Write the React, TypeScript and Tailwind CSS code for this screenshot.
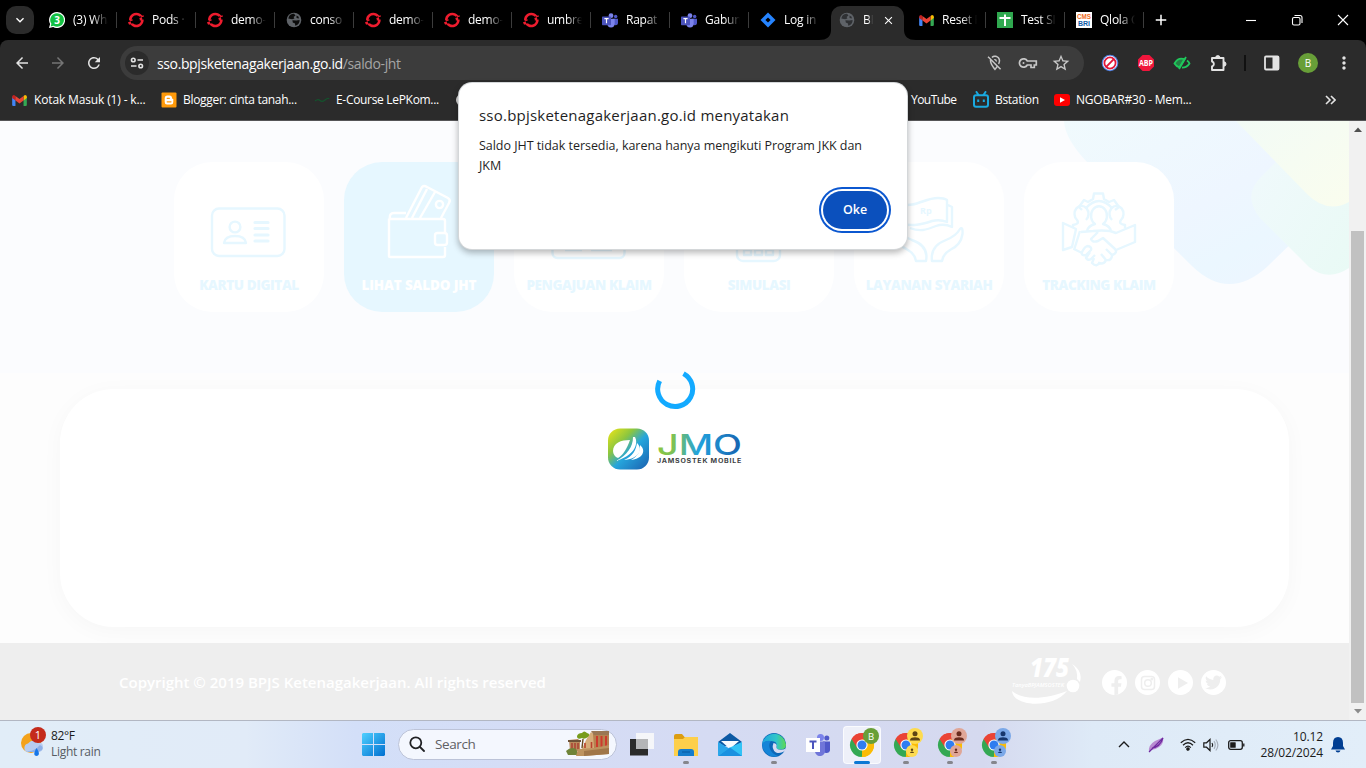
import React from "react";
import {
  MdArrowBack,
  MdArrowForward,
  MdRefresh,
  MdOutlineLocationOff,
  MdStarBorder,
  MdMoreVert,
  MdClose,
  MdAdd,
  MdKeyboardArrowDown,
} from "react-icons/md";
import { SiRedhatopenshift } from "react-icons/si";
import { FaFacebookF, FaTwitter } from "react-icons/fa";

const OpenShift = () => <SiRedhatopenshift className="size-4 text-[#ee1c2e]" />;

const Globe = ({ fill, land }: { fill: string; land: string }) => (
  <svg viewBox="0 0 16 16" className="size-4">
    <circle cx="8" cy="8" r="7.3" fill={fill} />
    <path d="M3 4.5 C4 2.5 6 1.6 8 1.8 L9.5 3.4 L7.6 5 L8.4 6.4 L6.2 7.2 L2.3 6.6Z" fill={land} />
    <path d="M6.4 8.2 L10.4 8.4 L13.6 8 C13.8 10.6 12 13.2 9.2 13.8 L9 11.6 L6.8 10.4Z" fill={land} />
    <path d="M10.5 3.6 L12.6 4.8 L12.8 6.6 L10.6 6Z" fill={land} />
  </svg>
);

const Gmail = () => (
  <svg viewBox="0 0 16 12" className="h-[11px] w-[15px]">
    <path d="M0 1.5 L3.6 4.2 V12 H1.2 Q0 12 0 10.8Z" fill="#4285f4" />
    <path d="M16 1.5 L12.4 4.2 V12 H14.8 Q16 12 16 10.8Z" fill="#34a853" />
    <path d="M12.4 1 L14 0 Q16 0 16 1.8 V3.2 L12.4 5.9Z" fill="#fbbc04" />
    <path d="M3.6 1 L2 0 Q0 0 0 1.8 V3.2 L3.6 5.9Z" fill="#c5221f" />
    <path d="M3.6 1 L8 4.4 L12.4 1 V5.9 L8 9.2 L3.6 5.9Z" fill="#ea4335" />
  </svg>
);

const WhatsApp = () => (
  <svg viewBox="0 0 16 16" className="size-4">
    <path d="M8 0 A8 8 0 1 1 4.2 15 L0 16 L1.1 12 A8 8 0 0 1 8 0Z" fill="#fff" />
    <path d="M8 1.2 A6.8 6.8 0 1 1 4.4 13.7 L1.7 14.4 L2.4 11.8 A6.8 6.8 0 0 1 8 1.2Z" fill="#12c143" />
    <text x="8" y="11.6" fontSize="10" fontWeight="700" fill="#fff" textAnchor="middle" fontFamily="Open Sans, sans-serif">3</text>
  </svg>
);

const Teams = ({ className }: { className: string }) => (
  <svg viewBox="0 0 24 22" className={className}>
    <circle cx="20.5" cy="5" r="2.6" fill="#5059c9" />
    <path d="M17 8.5 H24 V15 A3.6 3.6 0 0 1 17 15.5Z" fill="#5059c9" />
    <circle cx="13.5" cy="3.8" r="3.6" fill="#7b83eb" />
    <path d="M8 8.5 H19 V16 A5.5 5.5 0 0 1 8 16Z" fill="#7b83eb" />
    <rect x="0" y="5" width="13.5" height="13" rx="1" fill="#4b53bc" />
    <path d="M3.6 8.2 H9.9 M6.75 8.2 V15.2" stroke="#fff" strokeWidth="1.7" />
  </svg>
);

const Jira = () => (
  <svg viewBox="0 0 16 16" className="size-4">
    <path d="M8 .5 L15.5 8 L8 15.5 L.5 8Z" fill="#2684ff" />
    <path d="M8 5.4 L10.6 8 L8 10.6 L5.4 8Z" fill="#000" />
  </svg>
);

const Sheets = () => (
  <svg viewBox="0 0 16 16" className="size-4">
    <rect width="16" height="16" fill="#2fa84f" />
    <path d="M8 2.5 V14 M2.5 6 H13.5" stroke="#fff" strokeWidth="2" />
  </svg>
);

const Cms = () => (
  <svg viewBox="0 0 16 16" className="size-4">
    <rect width="16" height="16" fill="#fff" />
    <g fontFamily="Liberation Sans, sans-serif" fontWeight="700" fontSize="7.4">
      <text x="1" y="7.4" fill="#f26b21" textLength="14" lengthAdjust="spacingAndGlyphs">CMS</text>
      <text x="2" y="14" fill="#125ea8" textLength="12" lengthAdjust="spacingAndGlyphs">BRI</text>
    </g>
  </svg>
);

const Tab = ({ icon, title, sep = true }: { icon: React.ReactNode; title: string; sep?: boolean }) => (
  <div className="flex h-full w-[79px] shrink-0 items-center pl-[11px]">
    <div className="flex w-4 shrink-0 justify-center">{icon}</div>
    <div className="ml-2 w-[35px] overflow-hidden whitespace-nowrap text-[12px] tracking-[-0.02em] text-white [mask-image:linear-gradient(to_right,black_55%,transparent)]">
      {title}
    </div>
    {sep && <div className="ml-auto h-4 w-px bg-[#3c3c3c]" />}
  </div>
);

const TabStrip = () => (
  <div className="flex h-10 bg-black">
    <div className="flex w-[38px] shrink-0 items-center pl-1.5">
      <div className="flex size-7 items-center justify-center rounded-[10px] bg-[#2b2b2b]">
        <MdKeyboardArrowDown className="size-4 text-white" />
      </div>
    </div>
    <Tab icon={<WhatsApp />} title="(3) Wha" />
    <Tab icon={<OpenShift />} title="Pods ·" />
    <Tab icon={<OpenShift />} title="demo-" />
    <Tab icon={<Globe fill="#5f6368" land="#0b0b0b" />} title="conso" />
    <Tab icon={<OpenShift />} title="demo-" />
    <Tab icon={<OpenShift />} title="demo-" />
    <Tab icon={<OpenShift />} title="umbre" />
    <Tab icon={<Teams className="h-[15px] w-4" />} title="Rapat" />
    <Tab icon={<Teams className="h-[15px] w-4" />} title="Gabun" />
    <Tab icon={<Jira />} title="Log in" sep={false} />
    <div className="flex w-[79px] shrink-0 items-end">
      <svg viewBox="0 0 12 10" className="-ml-[9px] h-2.5 w-[12px] shrink-0">
        <path d="M0 10 Q12 10 12 0 V10Z" fill="#2b2b2b" />
      </svg>
      <div className="flex h-[34px] w-[73px] shrink-0 items-center rounded-t-[10px] bg-[#2b2b2b] pb-[6px] pl-2">
        <Globe fill="#5f6368" land="#2f3134" />
        <div className="ml-2 w-2.5 overflow-hidden whitespace-nowrap text-[12px] text-white [mask-image:linear-gradient(to_right,black_50%,transparent)]">BPJS</div>
        <MdClose className="ml-[9px] size-[13px] text-white" />
      </div>
      <svg viewBox="0 0 12 10" className="h-2.5 w-[12px] shrink-0">
        <path d="M0 0 Q0 10 12 10 H0Z" fill="#2b2b2b" />
      </svg>
    </div>
    <Tab icon={<Gmail />} title="Reset P" />
    <Tab icon={<Sheets />} title="Test SI" />
    <Tab icon={<Cms />} title="Qlola C" />
    <div className="flex w-[34px] items-center justify-center">
      <MdAdd className="size-[18px] text-white" />
    </div>
    <div className="ml-auto flex items-center pr-[17px] text-white">
      <svg viewBox="0 0 104 12" className="h-3 w-[104px]" fill="none" stroke="currentColor" strokeWidth="1.1">
        <path d="M1 6.5 H11" />
        <rect x="47.5" y="3.5" width="7.5" height="7.5" rx="1.5" />
        <path d="M49.500 1.5 H55 Q57 1.5 57 3.5 V9" />
        <path d="M93 1 L103 11 M103 1 L93 11" />
      </svg>
    </div>
  </div>
);

const Toolbar = () => (
  <div className="flex h-[44px] items-center rounded-t-[8px] bg-[#2b2b2b] pl-[13px] text-[#e3e3e3]">
    <MdArrowBack className="mt-0.5 size-[18px]" />
    <MdArrowForward className="ml-[18px] mt-0.5 size-[18px] text-[#757575]" />
    <MdRefresh className="ml-[18px] mt-0.5 size-[18px]" />
    <div className="ml-[17px] mt-0.5 flex h-[34px] w-[964px] items-center rounded-full bg-[#3c3c3c] pl-[5px] pr-3.5">
      <div className="flex size-6 items-center justify-center rounded-full bg-[#2b2b2b]">
        <svg viewBox="0 0 14 12" className="h-3 w-3.5" fill="none" stroke="#e3e3e3" strokeWidth="1.6">
          <circle cx="3.3" cy="3" r="1.8" />
          <path d="M7.5 3 H13 M1 9 H6.5" />
          <circle cx="10.7" cy="9" r="1.8" />
        </svg>
      </div>
      <div className="ml-2 text-[14px] tracking-[-0.027em] text-white">
        sso.bpjsketenagakerjaan.go.id<span className="text-[#a5a5a5]">/saldo-jht</span>
      </div>
      <div className="ml-auto flex items-center gap-[14px] text-[#c7c7c7]">
        <MdOutlineLocationOff className="size-[18px]" />
        <svg viewBox="0 0 20 12" className="h-3 w-5" fill="none" stroke="currentColor" strokeWidth="1.7">
          <path d="M9.3 4 A4.2 4.2 0 1 0 9.3 8 H13 V10.5 H16.3 V8 H18.3 V4Z" />
          <circle cx="5.5" cy="6" r="1" fill="currentColor" stroke="none" />
        </svg>
        <MdStarBorder className="-mx-px size-5" />
      </div>
    </div>
    <div className="ml-[17px] mt-0.5 flex grow items-center">
      <svg viewBox="0 0 18 18" className="size-[18px]">
        <circle cx="9" cy="9" r="8.300" fill="#4f7fe0" />
        <circle cx="9" cy="9" r="7.200" fill="#fff" />
        <circle cx="9" cy="9" r="5.6" fill="#fff" stroke="#e0163a" strokeWidth="1.800" />
        <path d="M5.2 12.8 L12.8 5.2" stroke="#e0163a" strokeWidth="1.900" />
      </svg>
      <svg viewBox="0 0 18 18" className="ml-[18px] size-[18px]">
        <path d="M5.6 1 H12.4 L17 5.6 V12.4 L12.4 17 H5.6 L1 12.4 V5.6Z" fill="#f0163c" />
        <text x="2" y="11.900" fontSize="8" fontWeight="700" fill="#fff" textLength="14" lengthAdjust="spacingAndGlyphs" fontFamily="Open Sans, sans-serif">ABP</text>
      </svg>
      <svg viewBox="0 0 18 14" className="ml-[18px] h-3.5 w-[18px]" fill="none" stroke="#1fc75b" strokeWidth="1.8">
        <path d="M1.5 7.5 C4 3 8 2 11.5 3.2 L6.5 11.3 C4 10.6 2.5 9.2 1.5 7.5Z" fill="#1fc75b" fillOpacity=".55" />
        <path d="M14 4.5 Q16 6 16.5 7.5 C14.6 10.6 12 11.6 9 11.6 M13 1 L6 13" />
      </svg>
      <svg viewBox="0 0 18 18" className="ml-[19px] size-[18px]" fill="none" stroke="#e3e3e3" strokeWidth="1.900" strokeLinejoin="round">
        <path d="M2 4 H13.500 V16 H2 V12.500 A2.600 2.600 0 0 0 2 7.500Z" />
        <path d="M5.600 3.800 A2.200 2.200 0 0 1 10 3.800Z M13.800 7.800 A2.200 2.200 0 0 1 13.800 12.200Z" fill="#e3e3e3" strokeWidth="1" />
      </svg>
      <div className="ml-4 h-4 w-0.5 bg-[#111]" />
      <svg viewBox="0 0 16 16" className="ml-[18px] size-4">
        <rect x="1" y="1.5" width="13.5" height="13" rx="1" fill="none" stroke="#e3e3e3" strokeWidth="1.8" />
        <rect x="8.5" y="1.5" width="6" height="13" fill="#e3e3e3" />
      </svg>
      <div className="ml-[18px] flex size-5 items-center justify-center rounded-full bg-[#689f38] text-[10px] text-white">B</div>
      <MdMoreVert className="ml-[16px] size-5" />
    </div>
  </div>
);

const bm = "text-[12px] tracking-[-0.026em] text-white whitespace-nowrap";

const Bookmarks = () => (
  <div className="flex h-[37px] items-center border-b border-[#555557] bg-[#2b2b2b] pb-1 pl-3">
    <Gmail />
    <span className="ml-[7px] w-[127px] whitespace-nowrap text-[12px] tracking-[-0.012em] text-white">Kotak Masuk (1) - k...</span>
    <svg viewBox="0 0 16 16" className="size-4">
      <rect x=".5" y=".5" width="15" height="15" rx="1" fill="#ff9a0a" />
      <path d="M6 3.5 H8.5 Q11 3.5 11 6 Q11 7 12.3 7 V10 Q12.3 12.5 10 12.5 H6 Q3.7 12.5 3.7 10 V6 Q3.7 3.5 6 3.5Z" fill="#fff" />
      <path d="M6.2 6.3 H8.4 M6.2 9.8 H10" stroke="#ff9a0a" strokeWidth="1.2" strokeLinecap="round" />
    </svg>
    <span className={`${bm} ml-1.5 w-[131px]`}>Blogger: cinta tanah...</span>
    <svg viewBox="0 0 16 6" className="h-1.5 w-4">
      <path d="M1 4 Q4 1.5 6 3.5 T11 3 T15 2" fill="none" stroke="#14532d" strokeWidth="1.2" />
    </svg>
    <span className={`${bm} ml-1.5 w-[120px]`}>E-Course LePKom...</span>
    <div className="size-3 rounded-full bg-white/80" />
    <span className="ml-[443px] w-[61px] whitespace-nowrap text-[12px] tracking-[-0.045em] text-white">YouTube</span>
    <svg viewBox="0 0 18 18" className="size-[18px]" fill="none" stroke="#1aa9e0" strokeWidth="2">
      <path d="M4.5 1 L6.5 4 M13.5 1 L11.5 4" strokeLinecap="round" />
      <rect x="2" y="4.3" width="14" height="11.4" rx="2" />
      <path d="M6.2 8.5 V11 M11.8 8.5 V11" />
    </svg>
    <span className={`${bm} ml-[5px] w-[59px]`}>Bstation</span>
    <svg viewBox="0 0 16 12" className="h-3 w-4">
      <rect width="16" height="12" rx="3" fill="#f00" />
      <path d="M6 3.3 L11 6 L6 8.7Z" fill="#fff" />
    </svg>
    <span className="ml-1.5 whitespace-nowrap text-[12px] tracking-[-0.019em] text-white">NGOBAR#30 - Mem...</span>
    <svg viewBox="0 0 12 10" className="ml-auto mr-[30px] h-2.5 w-3" fill="none" stroke="#e3e3e3" strokeWidth="1.6">
      <path d="M2 1 L6 5 L2 9 M7 1 L11 5 L7 9" />
    </svg>
  </div>
);

const CardArt: Record<string, React.ReactNode> = {
  card: (
    <>
      <rect x="38" y="46.5" width="72.5" height="47.5" rx="7" />
      <circle cx="61" cy="65" r="5.4" />
      <path d="M50 81 H72 Q71 74 61 74 Q51 74 50 81Z" />
      <path d="M81 60.5 H94 M81 66.5 H94 M81 73 H94 M81 79 H94" strokeLinecap="round" strokeWidth="3.2" />
    </>
  ),
  wallet: (
    <>
      <path d="M45 56.5 V94 Q45 95 46.5 95 H99 Q101 95 101 93 V85 M101 71 V59 Q101 57 99 57 H46 Q45 51 50 51 H62" />
      <rect x="91" y="71" width="12" height="12" rx="2.5" />
      <path d="M62 56 L78 25 Q80 23 83 25 L104 36 Q107 38 105 41 L97 56 M68 56 L83 27 M76 56 L91 30" />
      <circle cx="95.500" cy="42.500" r="3.6" />
    </>
  ),
  claim: (
    <>
      <rect x="38.500" y="36" width="72" height="60" rx="5" />
      <path d="M51 88 H68 M77 88 H98" />
    </>
  ),
  calc: (
    <>
      <rect x="53" y="34" width="43" height="65" rx="6" />
      <rect x="60" y="88" width="7" height="5" />
      <rect x="71" y="88" width="7" height="5" />
      <rect x="82" y="88" width="7" height="5" />
    </>
  ),
  syariah: (
    <>
      <path d="M46 42 C62 46 70 36 84 36 Q90 36 93 38 V60 Q86 57 78 59 C66 63 60 64 46 62Z M94 43 L98 45 V65 Q90 61 82 64 C72 68 66 70 56 66" />
      <path d="M78 99 Q76 84 92 78 Q102 74 106 67 Q109 64 108.500 72 Q107 83 96 88 Q89 92 88 99Z" />
      <path d="M72 99 Q75 84 58 78 Q48 74 44 67 Q41 64 41.500 72 Q43 83 54 88 Q61 92 62 99Z" />
      <text x="66" y="51.500" fontSize="9" fontWeight="700" stroke="none" className="fill-[#e6f7ff]" fontFamily="Open Sans, sans-serif">Rp</text>
    </>
  ),
  tracking: (
    <>
      <path d="M58 48 L55 45 L60 38 L64 40 L69 37 L70 31.500 H79 L80 37 L85 40 L90 38 L95 45 L91 48" />
      <path d="M62 46 Q75 32 88 46" />
      <path d="M49 66 V63 Q56 62 53 58 A7 8 0 1 1 62 58 M88 58 A7 8 0 1 1 97 58 Q94 62 101 63 V66" />
      <path d="M63 69 Q64 64 71 62 A8 9.500 0 1 1 79 62 Q86 64 87 69" />
      <path d="M39 61 L52 67 L48 85 L39 88Z M56 69 L50 88 M57 70 L69 69 Q78 68 86 69 L92 71 L111 63 V80 L92 88 M74 70 L67 77 Q68 81 74 79 L79 76 L91 87 Q94 91 88 93 L82 87" />
      <path d="M88 93 Q88 99 82 98 L77 92 M82 98 Q80 103 74 101 M50 87 L58 91" />
      <path d="M64 84 Q61 84 58 90 Q57 94 62 93 L67 88 Q68 85 64 84 M66 90 L62 96 Q64 99 67 97 L71 93 M70 96 L68 101 Q73 106 76 100" />
    </>
  ),
};

const cards = [
  { key: "card", label: "KARTU DIGITAL" },
  { key: "wallet", label: "LIHAT SALDO JHT", active: true },
  { key: "claim", label: "PENGAJUAN KLAIM" },
  { key: "calc", label: "SIMULASI" },
  { key: "syariah", label: "LAYANAN SYARIAH" },
  { key: "tracking", label: "TRACKING KLAIM" },
];

const Hero = () => (
  <div className="relative h-[252px] shrink-0 bg-[#fbfcfe]">
    <svg viewBox="0 0 290 164" className="absolute right-0 top-0 h-[164px] w-[290px]">
      <defs>
        <linearGradient id="blueTile" x1="0" y1="0" x2="1" y2="1">
          <stop offset="0" stopColor="#f0fafd" />
          <stop offset=".5" stopColor="#eef6ff" />
          <stop offset=".7" stopColor="#ebf7ff" />
          <stop offset="1" stopColor="#eef4ff" />
        </linearGradient>
        <linearGradient id="mintTile" x1="0" y1="0" x2="1" y2="1">
          <stop offset="0" stopColor="#f1f9fd" />
          <stop offset="1" stopColor="#e9faf5" />
        </linearGradient>
        <linearGradient id="limeTile" x1="0" y1="0" x2="1" y2="1">
          <stop offset="0" stopColor="#f2fbf6" />
          <stop offset="1" stopColor="#fafdee" />
        </linearGradient>
      </defs>
      <path d="M5 0 Q6 18 28 41 L133 145 Q170 181 209 145 L290 66 V0Z" fill="url(#blueTile)" />
      <path d="M290 0 V147 Q269 161 250 146 L201 97 Q184 76 200 58 L250 8Z" fill="url(#mintTile)" />
      <path d="M177 0 L248 73 Q268 93 290 81 V0Z" fill="url(#limeTile)" />
    </svg>
    <div className="relative flex justify-center gap-5 pr-px pt-[41px]">
      {cards.map((c) => (
        <div
          key={c.key}
          className={`flex size-[150px] flex-col items-center rounded-[38px] ${c.active ? "bg-[#e6f7ff] text-white" : "bg-white text-[#e6f7ff]"}`}
        >
          <svg viewBox="0 0 150 112" className="h-28 w-[150px] shrink-0" fill="none" stroke="currentColor" strokeWidth="2.4" strokeLinejoin="round">
            {CardArt[c.key]}
          </svg>
          <div className={`whitespace-nowrap text-[13.500px] font-extrabold leading-[22px] ${c.active ? "tracking-[-0.01em]" : "tracking-[-0.03em]"}`}>{c.label}</div>
        </div>
      ))}
    </div>
  </div>
);

const JmoLogo = () => (
  <svg viewBox="0 0 136 42" className="h-[42px] w-[136px]">
    <defs>
      <linearGradient id="leafBg" x1="0" y1="0" x2="1" y2="1">
        <stop offset="0" stopColor="#f0e616" />
        <stop offset=".32" stopColor="#8cc63f" />
        <stop offset=".55" stopColor="#25a5dc" />
        <stop offset="1" stopColor="#1b5fae" />
      </linearGradient>
      <linearGradient id="wordBg" gradientUnits="userSpaceOnUse" x1="50" y1="0" x2="135" y2="8">
        <stop offset="0" stopColor="#8cc63f" />
        <stop offset=".22" stopColor="#7cc158" />
        <stop offset=".5" stopColor="#22a3dd" />
        <stop offset="1" stopColor="#1763b0" />
      </linearGradient>
    </defs>
    <rect x="1" y=".500" width="41" height="41" rx="12" fill="url(#leafBg)" />
    <path d="M6 23 C6 15 14 12 23 12 C20 20 17 26 11 30 C8 29 6 26 6 23Z" fill="#fff" />
    <path d="M28 9 C32 17 26 28 9 33 C20 27 26 19 26 9Z" fill="#fff" />
    <path d="M30 15 C37 22 31 31 17 32 C26 28 29 22 30 15Z" fill="#fff" />
    <path d="M33 17 C40 23 35 31 24 32 C31 28 33 24 33 17Z" fill="#fff" />
    <text x="50" y="27" fontSize="28" fontWeight="500" textLength="85" lengthAdjust="spacingAndGlyphs" fill="url(#wordBg)" fontFamily="Inter, sans-serif">JMO</text>
    <text x="50" y="34.500" fontSize="5.500" fontWeight="700" textLength="85" lengthAdjust="spacingAndGlyphs" letterSpacing=".6" fill="#3c3f44" fontFamily="Inter, sans-serif">JAMSOSTEK MOBILE</text>
  </svg>
);

const Footer = () => (
  <div className="relative flex h-[77px] shrink-0 items-center bg-[#eee] pl-[119px] pr-[123px] pt-0.5 text-white">
    <div className="text-[15px] font-semibold tracking-[0]">Copyright © 2019 BPJS Ketenagakerjaan. All rights reserved</div>
    <svg viewBox="0 0 72 48" className="-mt-1 ml-auto h-12 w-[72px]" fill="#fff">
      <text x="19" y="20" fontSize="26" fontWeight="800" fontStyle="italic" textLength="39" lengthAdjust="spacingAndGlyphs" fontFamily="Open Sans, sans-serif">175</text>
      <text x="1" y="30" fontSize="6" fontWeight="600" fontStyle="italic" textLength="52" lengthAdjust="spacingAndGlyphs" fontFamily="Open Sans, sans-serif">TanyaBPJAMSOSTEK</text>
      <path d="M1 34 C12 44 36 42 56 34 C42 52 2 50 1 34Z" />
      <circle cx="62" cy="29" r="6.300" />
      <path d="M61 7 Q72 14 69 25 L66 22 Q67 13 61 7Z" />
    </svg>
    <div className="ml-[19px] flex gap-2 text-[#eee]">
      <div className="flex size-[25px] items-end justify-center overflow-hidden rounded-full bg-white"><FaFacebookF className="ml-1 size-[19px]" /></div>
      <div className="flex size-[25px] items-center justify-center rounded-full bg-white">
        <svg viewBox="0 0 16 16" className="size-4" fill="none" stroke="currentColor" strokeWidth="1.500">
          <rect x="1.500" y="1.500" width="13" height="13" rx="3" />
          <circle cx="8" cy="8" r="3.300" />
          <circle cx="11.800" cy="4.200" r=".6" fill="currentColor" />
        </svg>
      </div>
      <div className="flex size-[25px] items-center justify-center rounded-full bg-white">
        <svg viewBox="0 0 12 14" className="ml-1 h-3 w-2.5"><path d="M0 0 L12 7 L0 14Z" fill="currentColor" /></svg>
      </div>
      <div className="flex size-[25px] items-center justify-center rounded-full bg-white"><FaTwitter className="size-[17px]" /></div>
    </div>
  </div>
);

const Page = () => (
  <div className="flex h-[599px]">
    <div className="relative flex w-[1349px] flex-col overflow-hidden bg-[#fdfdfd]">
      <Hero />
      <div className="grow px-[60px] py-4">
        <div className="h-full rounded-[54px] bg-white shadow-[0_4px_22px_rgba(0,0,0,0.03)]" />
      </div>
      <Footer />
      <div className="absolute left-0 right-0 top-[247px] flex flex-col items-center">
        <svg viewBox="0 0 42 42" className="size-[42px]">
          <path d="M29.500 5.600 A17.500 17.500 0 1 1 5.700 12.800" fill="none" stroke="#13aaff" strokeWidth="5" />
        </svg>
        <div className="mt-[18px]"><JmoLogo /></div>
      </div>
    </div>
    <div className="flex grow flex-col items-center justify-between bg-[#f1f1f1] py-1.5">
      <svg viewBox="0 0 8 5" className="h-[5px] w-2"><path d="M0 5 L4 .500 L8 5Z" fill="#505050" /></svg>
      <div className="mt-[99px] w-[13px] grow bg-[#c1c1c1]" />
      <svg viewBox="0 0 8 5" className="mt-1.5 h-[5px] w-2"><path d="M0 0 L4 4.500 L8 0Z" fill="#8b8b8b" /></svg>
    </div>
  </div>
);

const AlertDialog = () => (
  <div className="absolute left-[459px] top-[83px] h-[166px] w-[448px] rounded-[13px] bg-white px-5 pt-[21px] text-[#1f1f1f] shadow-[0_0_0_1px_#d4d7d9,0_3px_6px_1px_rgba(0,0,0,0.28)]">
    <div className="text-[15px] font-medium leading-[22px] tracking-[0.015em]">sso.bpjsketenagakerjaan.go.id menyatakan</div>
    <div className="mt-[10px] w-[400px] text-[12.500px] leading-5 tracking-[-0.003em]">
      Saldo JHT tidak tersedia, karena hanya mengikuti Program JKK dan<br />JKM
    </div>
    <div className="flex justify-end pt-[15px]">
      <button className="h-[38px] w-16 rounded-full bg-[#0b50bd] pt-px text-[12.500px] font-semibold text-white shadow-[0_0_0_2px_#fff,0_0_0_4px_#0b57d0]">Oke</button>
    </div>
  </div>
);

const Chrome = ({ children }: { children?: React.ReactNode }) => (
  <svg viewBox="0 0 30 30" className="-mt-1.5 ml-1 size-[30px] shrink-0 overflow-visible">
    <g transform="translate(1 6)">
      <path d="M12 12 L1.600 6 A12 12 0 0 1 22.400 6Z" fill="#ea4335" />
      <path d="M12 12 L22.400 6 A12 12 0 0 1 12 24Z" fill="#fbbc05" />
      <path d="M12 12 L12 24 A12 12 0 0 1 1.600 6Z" fill="#34a853" />
      <path d="M12 6.500 H22.700 L22.400 6 A12 12 0 0 0 1.600 6 L7.300 15Z" fill="#ea4335" />
      <path d="M16.800 14.700 L11.500 24 A12 12 0 0 0 22.700 6.500 H12Z" fill="#fbbc05" />
      <circle cx="12" cy="12" r="5.600" fill="#fff" />
      <circle cx="12" cy="12" r="4.500" fill="#2f7df0" />
    </g>
    {children}
  </svg>
);

const Person = ({ cx, cy, r, bg, fg }: { cx: number; cy: number; r: number; bg: string; fg: string }) => (
  <g transform={`translate(${cx} ${cy}) scale(${r / 8})`}>
    <circle r="8" fill={bg} />
    <circle cy="-2.200" r="2.500" fill={fg} />
    <path d="M-5 4.500 V3.500 Q-4 1.200 0 1.200 Q4 1.200 5 3.500 V4.500Z" fill={fg} />
  </g>
);

const Profile = ({ bg, fg }: { bg: string; fg: string }) => (
  <Chrome>
    <Person cx={22} cy={9} r={8} bg={bg} fg={fg} />
    <g transform="translate(19 24)">
      <circle r="6" fill={bg} />
      <circle cy="-1.200" r="1.200" fill={fg} />
      <path d="M-2 2 Q-2 .4 0 .4 Q2 .4 2 2Z" fill={fg} />
    </g>
  </Chrome>
);

const Slot = ({ children, run = false, active = false }: { children: React.ReactNode; run?: boolean; active?: boolean }) => (
  <div className="flex h-[47px] w-11 shrink-0 items-center justify-center">
    <div className={`relative flex size-[38px] items-center justify-center rounded-[4px] ${active ? "border border-white/70 bg-white/60" : ""}`}>
      {children}
      {run && <div className="absolute bottom-0 left-4 h-[3px] w-1.5 rounded-full bg-[#85868c]" />}
      {active && <div className="absolute -bottom-px left-2.5 h-[3px] w-4 rounded-full bg-[#0a78d4]" />}
    </div>
  </div>
);

const Taskbar = () => (
  <div className="flex h-12 items-center border-t border-[#b2b7c3] bg-[linear-gradient(90deg,#e1edf8_0%,#e1ebf8_18%,#d3dff8_26%,#d5dcf5_42%,#d5d9ef_72%,#deeaf7_80%,#e2eef9_100%)] font-['Open_Sans',sans-serif]">
    <div className="flex w-[351px] shrink-0 items-center pl-5">
      <svg viewBox="0 0 28 32" className="-mt-1 h-8 w-7">
        <circle cx="11" cy="16" r="10" fill="#f3a21c" />
        <path d="M7 25 A4.500 4.500 0 0 1 8 16.500 Q13 11 18 16 Q23 15 23 20 Q23 25 18 25Z" fill="#b7cdf1" />
        <path d="M7 24 Q14 25 20 18 Q24 20 22 23 L18 25 H8Z" fill="#8fb0e8" />
        <path d="M16.500 21 Q20 26 18.500 28 Q16.500 30 14.500 28 Q13.500 26 16.500 21Z" fill="#1777e8" />
        <circle cx="18" cy="8" r="8" fill="#c42b1c" />
        <text x="18" y="12" fontSize="11" fill="#fff" textAnchor="middle" fontFamily="Open Sans, sans-serif">1</text>
      </svg>
      <div className="-mt-0.5 ml-[3px] text-[12px] leading-4 tracking-[-0.03em] text-[#1b1b1b]">
        <div>82°F</div>
        <div className="tracking-[-0.025em] text-[#575c63]">Light rain</div>
      </div>
    </div>
    <div className="flex w-11 shrink-0 justify-center">
      <svg viewBox="0 0 23 23" className="size-[23px]">
        <defs>
          <linearGradient id="win" x1="0" y1="0" x2="1" y2="1">
            <stop offset="0" stopColor="#4fd0ff" />
            <stop offset="1" stopColor="#006fd0" />
          </linearGradient>
        </defs>
        <path d="M1 0 H11 V11 H0 V1Z M12 0 H22 L23 1 V11 H12Z M0 12 H11 V23 H1 L0 22Z M12 12 H23 V22 L22 23 H12Z" fill="url(#win)" />
      </svg>
    </div>
    <div className="-mt-px ml-[3px] mr-[3px] flex h-[31px] w-[219px] shrink-0 items-center rounded-full border border-[#bcc3d8] bg-[#f4f7fe] pl-2.5">
      <svg viewBox="0 0 16 16" className="size-4" fill="none" stroke="#202124" strokeWidth="1.800" strokeLinecap="round">
        <circle cx="6.800" cy="6.800" r="5.500" /><path d="M11 11 L15 15" />
      </svg>
      <div className="ml-2.5 text-[13.500px] tracking-[-0.03em] text-[#5f6064]">Search</div>
      <svg viewBox="0 0 44 26" className="ml-auto mr-[6px] h-[26px] w-[44px]">
        <path d="M3 9 L12 8 L14 10 V20 H4Z" fill="#b98a5c" />
        <path d="M2 9 H15 V11 H2Z" fill="#6d5137" />
        <path d="M6 12 V19 M9 12 V19 M12 12 V18" stroke="#a8372b" strokeWidth="1.300" />
        <path d="M0 20 Q5 15 10 18 L13 24 H2Z" fill="#6f8439" />
        <path d="M25 1 L28 3 V20 H15 L20 9Z" fill="#d6ad7a" />
        <path d="M27 3 H43 V17 H28Z" fill="#b58250" />
        <path d="M25 0 H43 V4 H28Z" fill="#9a7754" />
        <path d="M31 5 V16 M35.500 5 V16 M40 5 V15" stroke="#cd3a2d" strokeWidth="2" />
        <path d="M19 12 V17 M25.500 11 V17" stroke="#b8442f" strokeWidth="1.600" />
        <path d="M12 18 L28 17 L43 14 V23 L18 25 H10Z" fill="#bd935f" />
        <path d="M18 20 L43 17 V23 L18 25Z" fill="#a07648" />
        <path d="M17 8 L16 17" stroke="#6b4a20" strokeWidth="1.400" />
        <path d="M11 5 Q12 2 16 2 Q18 -1 21 2 Q25 3 22 6 Q18 9 16 7 Q11 9 11 5Z" fill="#789c1c" />
      </svg>
    </div>
    <Slot>
      <svg viewBox="0 0 24 23" className="h-[23px] w-6">
        <rect x="6" y="0" width="18" height="16" fill="#f5f6f9" />
        <rect x="0" y="6" width="18" height="16.500" fill="#2b2b2b" />
        <rect x="6" y="6" width="12" height="10" fill="#b4b5b7" />
      </svg>
    </Slot>
    <Slot run>
      <svg viewBox="0 0 24 22" className="h-[22px] w-6">
        <path d="M0 2 Q0 0 2 0 H8 L10.500 3 H22 Q24 3 24 5 V8 H0Z" fill="#dc9d11" />
        <path d="M0 5 H9 L11 3 H24 V22 H0Z" fill="#fdcf4b" />
        <path d="M4 22 V18 Q4 15 7 15 H17 Q20 15 20 18 V22Z" fill="#147ccc" />
        <path d="M8 18 H16" stroke="#075fa9" strokeWidth="1.200" />
      </svg>
    </Slot>
    <Slot>
      <svg viewBox="0 0 24 23" className="h-[23px] w-6">
        <path d="M0 9 L12 0 L24 9 L18 13 H6Z" fill="#0c59a4" />
        <path d="M3 8 H21 L12 16Z" fill="#f7fbff" />
        <path d="M0 9 L12 16 L0 23Z" fill="#2aa6ea" />
        <path d="M24 9 V23 H0 L12 14.500Z" fill="#32c3f6" />
        <path d="M0 23 L12 14.500 L24 23Z" fill="#1a91e0" />
      </svg>
    </Slot>
    <Slot run>
      <svg viewBox="0 0 24 24" className="size-6">
        <defs>
          <linearGradient id="edgeTop" x1="0" y1="0" x2="1" y2="0">
            <stop offset="0" stopColor="#20a5e0" />
            <stop offset=".6" stopColor="#30c6c8" />
            <stop offset="1" stopColor="#60d94f" />
          </linearGradient>
        </defs>
        <circle cx="12" cy="12" r="12" fill="#0c68b8" />
        <path d="M.2 11 A12 12 0 0 1 24 11.500 Q24 16.500 18.500 16.500 Q14 16.500 14.500 14 Q16 8 9 8 Q3 7.500 .2 11Z" fill="url(#edgeTop)" />
        <path d="M.2 11 Q3 7 9 8 Q6 11 8 16 Q10 21 16 23 Q9 25 4 20 Q0 16 .2 11Z" fill="#1585d8" />
        <path d="M11.500 10 Q15.500 10.500 14.400 14 Q14.200 16.500 18.500 16.800 Q21 17 24 15.500 L22.500 18.200 Q18 21 14 19.500 Q9 16 11.500 10Z" fill="#d6dcf2" />
      </svg>
    </Slot>
    <Slot>
      <svg viewBox="0 0 24 22" className="h-[22px] w-6">
        <circle cx="20.800" cy="4" r="2.500" fill="#5059c9" />
        <path d="M17 7.500 H24 V15 A3.500 3.500 0 0 1 17 16Z" fill="#5059c9" />
        <circle cx="14.500" cy="3.500" r="3.500" fill="#7b83eb" />
        <path d="M9 7.500 H19 V16 A5 5 0 0 1 9 18Z" fill="#7076d9" />
        <rect y="4" width="14" height="14" fill="#fff" />
        <path d="M3.500 7.500 H10.500 M7 7.500 V15" stroke="#4b53bc" strokeWidth="2" />
      </svg>
    </Slot>
    <Slot active>
      <Chrome>
        <circle cx="22" cy="9" r="8" fill="#689f38" />
        <text x="22" y="12.500" fontSize="9.500" fill="#fff" textAnchor="middle" fontFamily="Open Sans, sans-serif">B</text>
      </Chrome>
    </Slot>
    <Slot run><Profile bg="#fddb4f" fg="#5d4514" /></Slot>
    <Slot run><Profile bg="#e0a697" fg="#6a2c1e" /></Slot>
    <Slot run><Profile bg="#7ba8e8" fg="#17376d" /></Slot>
    <div className="ml-auto flex items-center pr-[21px] text-[#1b1b1b]">
      <svg viewBox="0 0 12 7" className="h-[7px] w-3" fill="none" stroke="currentColor" strokeWidth="1.400"><path d="M1 6 L6 1 L11 6" /></svg>
      <svg viewBox="0 0 16 16" className="ml-[18px] size-4">
        <path d="M1 15 Q0 8 7 4 L15 .500 Q16 7 11 10 Q7 13 3 13Z" fill="#b98bd2" />
        <path d="M1 15 L15 1 Q12 10 4 11" fill="none" stroke="#6e2aa0" strokeWidth="1.200" />
      </svg>
      <svg viewBox="0 0 16 13" className="ml-4 h-[13px] w-4" fill="none" stroke="currentColor" strokeWidth="1.200">
        <path d="M.8 4.800 Q8 -2.200 15.200 4.800 M3 7.200 Q8 2.300 13 7.200 M5.200 9.600 Q8 6.600 10.800 9.600" />
        <circle cx="8" cy="11" r="1.200" fill="currentColor" />
      </svg>
      <svg viewBox="0 0 16 14" className="ml-[7px] h-3.5 w-4" fill="none" stroke="currentColor" strokeWidth="1.200">
        <path d="M.8 4.800 H3.500 L7 1.500 V12.500 L3.500 9.200 H.8Z M9 5 Q10.500 7 9 9" />
        <path d="M11 3.200 Q13.500 7 11 10.800 M12.800 1.500 Q17 7 12.800 12.500" stroke="#a9b0bb" />
      </svg>
      <svg viewBox="0 0 17 10" className="ml-[9px] h-2.5 w-[17px]">
        <rect x=".700" y=".700" width="13.600" height="8.600" rx="2" fill="none" stroke="currentColor" strokeWidth="1.300" />
        <rect x="2.200" y="2.200" width="5.500" height="5.600" rx=".500" fill="currentColor" />
        <path d="M15.800 3.500 V6.500" stroke="currentColor" strokeWidth="1.300" />
      </svg>
      <div className="ml-[15px] w-[63px] text-right text-[12px] leading-4 tracking-[-0.01em]">
        <div>10.12</div>
        <div>28/02/2024</div>
      </div>
      <svg viewBox="0 0 14 16" className="ml-2 h-4 w-3.5" fill="#003e92">
        <path d="M7 0 Q12 0 12 6 V9 L14 12.500 H0 L2 9 V6 Q2 0 7 0Z M4.500 13.500 H9.500 Q9 15.500 7 15.500 Q5 15.500 4.500 13.500Z" />
      </svg>
    </div>
  </div>
);

export default function App() {
  return (
    <div className="relative flex h-[768px] w-[1366px] flex-col overflow-hidden bg-black font-['Open_Sans','Noto_Sans',sans-serif]">
      <TabStrip />
      <Toolbar />
      <Bookmarks />
      <Page />
      <AlertDialog />
      <Taskbar />
    </div>
  );
}
